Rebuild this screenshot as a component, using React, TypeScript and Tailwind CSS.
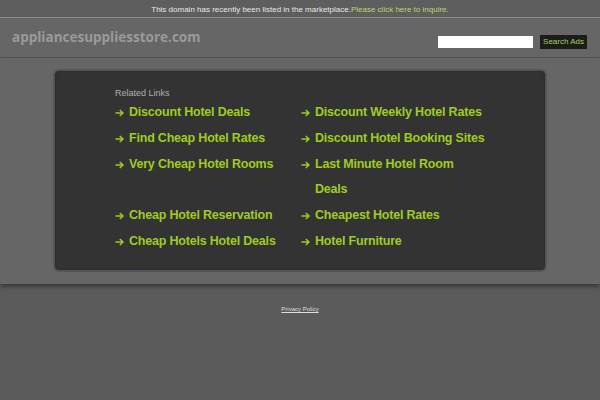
const LEFT = ["Discount Hotel Deals", "Find Cheap Hotel Rates", "Very Cheap Hotel Rooms", "Cheap Hotel Reservation", "Cheap Hotels Hotel Deals"];
const RIGHT = ["Discount Weekly Hotel Rates", "Discount Hotel Booking Sites", "Last Minute Hotel Room\nDeals", "Cheapest Hotel Rates", "Hotel Furniture"];

function Arrow() {
  return (
    <svg width="9" height="8" viewBox="0 0 9 8" className="shrink-0 mt-[9px] mr-[5px]" fill="none" stroke="currentColor" strokeWidth="1.5">
      <path d="M0.5 4h7.5M4.8 1l3.2 3-3.2 3" />
    </svg>
  );
}

function LinkItem({ label }: { label: string }) {
  return (
    <li className="flex text-[12.5px] leading-[25.8px] font-bold tracking-[-0.2px] text-[#9fcc1f]">
      <Arrow />
      <a href="#" className="whitespace-pre-line hover:underline">{label}</a>
    </li>
  );
}

export default function App() {
  return (
    <div className="min-h-[400px] bg-[#5b5b5b] font-['Liberation_Sans',Arial,sans-serif]">
      {/* marketplace notice */}
      <div className="h-[18px] bg-[#5e5e5e] border-b border-[#8a8a8a] text-center text-[8px] leading-[19px] text-[#e8e8e8]">
        This domain has recently been listed in the marketplace.
        <a href="#" className="text-[#b7d86a]">Please click here to inquire.</a>
      </div>

      {/* header */}
      <div className="h-[40px] bg-[#666666] border-b border-[#555555] flex items-center justify-between pl-[12px] pr-[13px]">
        <span className="text-[13.5px] font-bold text-[#9a9a9a] font-['Open_Sans',sans-serif]">appliancesuppliesstore.com</span>
        <div className="flex items-center gap-[7px] mt-[9px]">
          <input className="w-[95px] h-[12px] bg-white border-0 outline-none" />
          <button className="h-[14px] px-[3px] bg-[#1b1d18] text-[8px] text-[#a7cf6a]">Search Ads</button>
        </div>
      </div>

      {/* content */}
      <div className="bg-[#666666] pt-[11px] pb-[12px] shadow-[0_3px_4px_rgba(0,0,0,0.35)]">
        <div className="mx-[53px] h-[203px] rounded-[6px] bg-[#333333] border-2 border-[#555555] shadow-[inset_0_0_2px_rgba(0,0,0,0.4)] pl-[60px] pt-[16px]">
          <p className="text-[9px] leading-[13px] text-[#b0b0b0]">Related Links</p>
          <div className="flex">
            <ul className="w-[186px]">
              {LEFT.slice(0, 3).map(l => <LinkItem key={l} label={l} />)}
              <li className="h-[25.8px]" />
              {LEFT.slice(3).map(l => <LinkItem key={l} label={l} />)}
            </ul>
            <ul className="w-[190px]">
              {RIGHT.map(l => <LinkItem key={l} label={l} />)}
            </ul>
          </div>
        </div>
      </div>

      <div className="pt-[10px] text-center">
        <a href="#" className="text-[6px] text-[#dddddd] underline">Privacy Policy</a>
      </div>
    </div>
  );
}
